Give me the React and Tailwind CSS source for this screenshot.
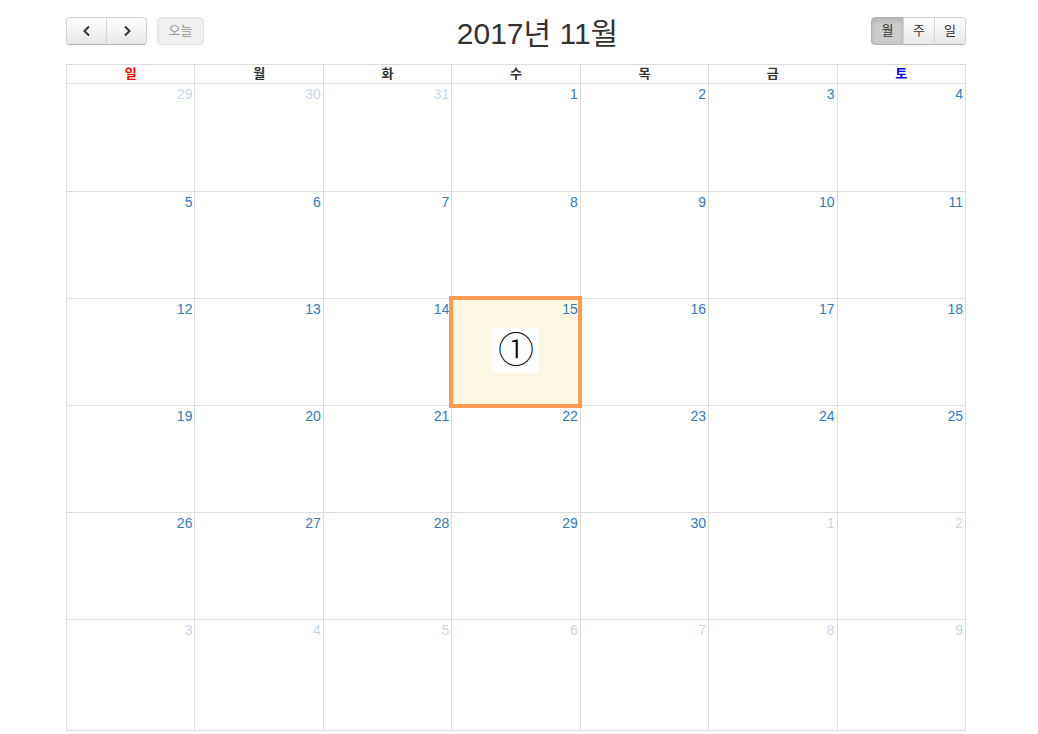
import React from "react";

const weekdays = [
  { label: "일", color: "text-[#ff0000]" },
  { label: "월", color: "text-[#333]" },
  { label: "화", color: "text-[#333]" },
  { label: "수", color: "text-[#333]" },
  { label: "목", color: "text-[#333]" },
  { label: "금", color: "text-[#333]" },
  { label: "토", color: "text-[#0000ff]" },
];

// 6 weeks shown for November 2017
const days = [];
[29, 30, 31].forEach((d) => days.push({ d, other: true }));
for (let d = 1; d <= 30; d++) days.push({ d, other: false });
for (let d = 1; d <= 9; d++) days.push({ d, other: true });

const rowHeights = ["h-[108px]", "h-[107px]", "h-[107px]", "h-[107px]", "h-[107px]", "h-[111px]"];

const btn =
  "h-[28px] flex items-center justify-center border border-[#d4d4d4] border-b-[#b3b3b3] bg-linear-to-b from-white to-[#e6e6e6] text-[#333] shadow-[inset_0_1px_0_rgba(255,255,255,0.2),0_1px_2px_rgba(0,0,0,0.05)]";

function Chevron({ dir }) {
  return (
    <svg width="10" height="12" viewBox="0 0 10 12" fill="none">
      <path
        d={dir === "left" ? "M7 1.5 L2.5 6 L7 10.5" : "M3 1.5 L7.5 6 L3 10.5"}
        stroke="#333"
        strokeWidth="2"
      />
    </svg>
  );
}

export default function App() {
  return (
    <div
      className="w-[1038px] h-[734px] bg-white pt-[17px] pl-[66px]"
      style={{ fontFamily: '"Liberation Sans", "Noto Sans CJK KR", sans-serif' }}
    >
      <div className="w-[900px]">
        <div className="flex items-center h-[28px] mb-[19px]">
          <div className="flex">
            <button className={`${btn} w-[41px] rounded-l-[4px]`}>
              <Chevron dir="left" />
            </button>
            <button className={`${btn} w-[41px] -ml-px rounded-r-[4px]`}>
              <Chevron dir="right" />
            </button>
          </div>
          <button className="ml-[10px] h-[28px] w-[47px] rounded-[4px] border border-[#e3e3e3] bg-[#f0f0f0] text-[13px] text-[#999]">
            오늘
          </button>
          <h2 className="flex-1 mt-[6px] text-center text-[30px] leading-[34px] text-[#333]">2017년 11월</h2>
          <div className="flex text-[13px]">
            <button className="h-[28px] w-[33px] rounded-l-[4px] border border-[#b3b3b3] bg-[#cccccc] text-[#333] shadow-[inset_0_2px_4px_rgba(0,0,0,0.15)]">
              월
            </button>
            <button className={`${btn} w-[32px] -ml-px`}>주</button>
            <button className={`${btn} w-[32px] -ml-px rounded-r-[4px]`}>일</button>
          </div>
        </div>

        <div className="border-l border-t border-[#dddddd]">
          <div className="grid grid-cols-7">
            {weekdays.map((w) => (
              <div
                key={w.label}
                className={`h-[19px] border-r border-b border-[#dddddd] text-center text-[13px] font-bold leading-[18px] ${w.color}`}
              >
                {w.label}
              </div>
            ))}
          </div>
          <div className="grid grid-cols-7">
            {days.map((day, i) => {
              const isHighlight = i === 17;
              return (
                <div
                  key={i}
                  className={`relative border-r border-b border-[#dddddd] ${rowHeights[Math.floor(i / 7)]} ${
                    isHighlight ? "bg-[#fcf8e3]" : ""
                  }`}
                >
                  {isHighlight && (
                    <div className="absolute -left-[3px] -top-[3px] w-[133px] h-[112px] border-4 border-[#ff9c52] z-10" />
                  )}
                  <div
                    className={`relative z-20 pt-[2px] pr-[2px] text-right text-[14px] leading-[16px] ${
                      day.other ? "text-[#337ab7]/30" : "text-[#337ab7]"
                    }`}
                  >
                    {day.d}
                  </div>
                  {isHighlight && (
                    <div className="mt-[11px] flex justify-center">
                      <div
                        className="w-[47px] h-[45px] bg-white flex items-center justify-center text-[36px] font-light leading-none text-black"
                        style={{ fontFamily: '"DejaVu Serif", "Noto Sans CJK KR", serif' }}
                      >
                        ①
                      </div>
                    </div>
                  )}
                </div>
              );
            })}
          </div>
        </div>
      </div>
    </div>
  );
}
